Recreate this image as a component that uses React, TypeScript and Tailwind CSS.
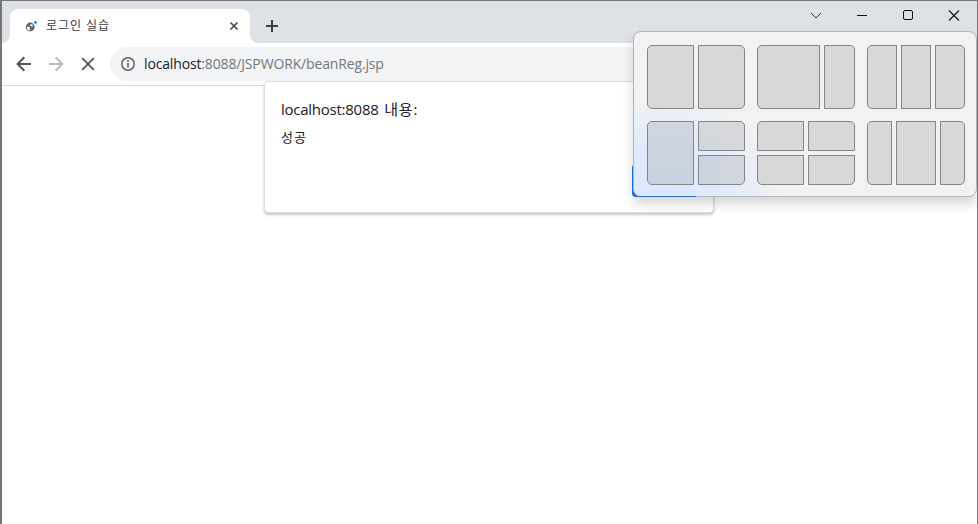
import React from "react";

const cell = "border border-[#858585] bg-[#d8d8d8]";
const tintedCell = "border border-[#858688]";

function SnapPanel() {
  return (
    <div className="absolute left-[633px] top-[31px] h-[166px] w-[344px] rounded-[8px] border border-[#b4b6b9] bg-[#f2f2f3] bg-[radial-gradient(ellipse_125px_95px_at_25px_160px,#d9e7fd_0%,#e1ebfc_55%,#f2f2f3_100%)] px-[13px] py-[13px] shadow-[0_7px_12px_rgba(0,0,0,0.16)]">
      <div className="grid grid-cols-[98px_98px_98px] grid-rows-[64px_64px] gap-3">
        <div className="flex gap-1">
          <div className={`${cell} w-[47px] rounded-l-[5px]`} />
          <div className={`${cell} w-[47px] rounded-r-[5px]`} />
        </div>
        <div className="flex gap-1">
          <div className={`${cell} w-[63px] rounded-l-[5px]`} />
          <div className={`${cell} w-[31px] rounded-r-[5px]`} />
        </div>
        <div className="flex gap-1">
          <div className={`${cell} w-[30px] rounded-l-[5px]`} />
          <div className={`${cell} w-[30px]`} />
          <div className={`${cell} w-[30px] rounded-r-[5px]`} />
        </div>
        <div className="flex gap-1">
          <div className={`${tintedCell} w-[47px] rounded-l-[5px] bg-linear-to-b from-[#d0d6e0] to-[#c7d3e1]`} />
          <div className="flex w-[47px] flex-col gap-1">
            <div className={`${tintedCell} h-[30px] rounded-tr-[5px] bg-linear-to-tr from-[#ced4e0] via-[#d6d7da] to-[#d8d8d8]`} />
            <div className={`${tintedCell} h-[30px] rounded-br-[5px] bg-linear-to-r from-[#cbd4e2] to-[#d4d6dd]`} />
          </div>
        </div>
        <div className="grid grid-cols-2 gap-1">
          <div className={`${cell} rounded-tl-[5px]`} />
          <div className={`${cell} rounded-tr-[5px]`} />
          <div className={`${cell} rounded-bl-[5px]`} />
          <div className={`${cell} rounded-br-[5px]`} />
        </div>
        <div className="flex gap-1">
          <div className={`${cell} w-[25px] rounded-l-[5px]`} />
          <div className={`${cell} w-[40px]`} />
          <div className={`${cell} w-[25px] rounded-r-[5px]`} />
        </div>
      </div>
      <div className="absolute -bottom-px left-[5px] h-px w-[57px] bg-[#2f6cbd]" />
    </div>
  );
}

function TabStrip() {
  return (
    <div className="flex h-[42px] items-end bg-[#dee1e6]">
      <svg className="h-2 w-2 shrink-0" viewBox="0 0 8 8">
        <path d="M8 0v8H0a8 8 0 0 0 8-8z" fill="#fff" />
      </svg>
      <div className="flex h-[34px] w-[240px] items-center rounded-t-[8px] bg-white pl-[15px] pr-[11px]">
        <svg width="13" height="14" viewBox="0 0 13 14">
          <circle cx="5.200" cy="8" r="4.400" fill="#5f6368" />
          <path d="M1.900 7.600l1.900.1 1.300 1.100-.5 1 .8.800-.7.900C2.700 11.200 1.700 9.800 1.900 7.600zM5.600 5.300l1.700.2.800 1.200-1.100.8-1.400-.4-.7-.9z" fill="#fff" />
          <circle cx="10.500" cy="3.500" r="1.200" fill="#1a73e8" />
          <path d="M10.500 1.700v3.600M8.700 3.500h3.600" stroke="#1a73e8" strokeWidth=".6" />
        </svg>
        <span className="ml-[8px] -mt-px flex-1 whitespace-nowrap text-[12px] leading-4 tracking-[0.95px] text-[#3c4043]">로그인 실습</span>
        <svg width="10" height="10" viewBox="0 0 10 10">
          <path d="M1.500 1.500l7 7M8.500 1.500l-7 7" stroke="#45494d" strokeWidth="1.700" />
        </svg>
      </div>
      <svg className="h-2 w-2 shrink-0" viewBox="0 0 8 8">
        <path d="M0 0v8h8a8 8 0 0 1-8-8z" fill="#fff" />
      </svg>
      <svg className="mb-[10px] ml-[7px]" width="14" height="14" viewBox="0 0 14 14">
        <path d="M7 1v12M1 7h12" stroke="#3c4043" strokeWidth="2" />
      </svg>
      <div className="ml-auto flex h-full items-start pr-[17px] pt-2">
        <svg width="12" height="12" viewBox="0 0 12 12" fill="none" stroke="#333" className="mr-[34px]">
          <path d="M1 4l5 5 5-5" />
        </svg>
        <svg width="12" height="12" viewBox="0 0 12 12" className="mr-[34px]">
          <path d="M1 6.500h10" stroke="#111" />
        </svg>
        <svg width="12" height="12" viewBox="0 0 12 12" fill="none" className="mr-[34px]">
          <rect x="1.500" y="1.500" width="9" height="9" rx="1.500" stroke="#111" />
        </svg>
        <svg width="12" height="12" viewBox="0 0 12 12" fill="none">
          <path d="M1 1.500l10 10M11 1.500l-10 10" stroke="#111" strokeWidth="1.100" />
        </svg>
      </div>
    </div>
  );
}

function Toolbar() {
  return (
    <div className="flex h-[43px] items-start border-b border-[#d8dadd] bg-white pt-1">
      <div className="flex h-[34px] w-[108px] items-center pl-[14px]">
        <svg width="16" height="16" viewBox="0 0 16 16" fill="none" stroke="#51565b" strokeWidth="2">
          <path d="M15 8H2M8.300 1.300L1.600 8l6.700 6.700" />
        </svg>
        <svg width="16" height="16" viewBox="0 0 16 16" fill="none" stroke="#babcbe" strokeWidth="2" className="ml-4">
          <path d="M1 8h13M7.700 1.300L14.400 8l-6.700 6.700" />
        </svg>
        <svg width="16" height="16" viewBox="0 0 16 16" fill="none" stroke="#51565b" strokeWidth="1.800" className="ml-4">
          <path d="M2.200 2.200l11.600 11.600M13.800 2.200L2.200 13.800" />
        </svg>
      </div>
      <div className="flex h-[34px] flex-1 items-center rounded-l-[17px] bg-[#f1f3f4] pl-[11px]">
        <svg width="14" height="14" viewBox="0 0 14 14" fill="none">
          <circle cx="7" cy="7" r="6.200" stroke="#5f6368" strokeWidth="1.500" />
          <path d="M7 6v4.500M7 3.300v1.600" stroke="#5f6368" strokeWidth="1.600" />
        </svg>
        <span className="ml-[9px] whitespace-nowrap text-[14px] leading-5 tracking-[-0.15px] text-[#74787c]">
          <span className="text-[#202124]">localhost</span>:8088/JSPWORK/beanReg.jsp
        </span>
      </div>
    </div>
  );
}

export default function App() {
  return (
    <div className="relative h-[524px] w-[978px] overflow-hidden border-l-2 border-r border-t border-l-[#777] border-r-[#777] border-t-[#777] bg-white font-['Open_Sans','Noto_Sans_CJK_KR',sans-serif]">
      <TabStrip />
      <Toolbar />
      <div className="absolute -left-[2px] -top-px h-[524px] w-[978px]">
        <div className="absolute left-[264px] top-[81px] h-[132px] w-[450px] rounded-[4px] border border-[#dcdddf] bg-white px-4 pt-4 shadow-[0_2px_3px_rgba(0,0,0,0.22)]">
          <p className="whitespace-nowrap text-[15px] leading-[22px] text-[#202124]">
            <span className="tracking-[-0.25px] [word-spacing:2px]">localhost:8088 </span>
            <span className="tracking-[0.8px]">내용:</span>
          </p>
          <p className="mt-[7px] text-[13px] leading-5 tracking-[1px] text-[#202124]">성공</p>
        </div>
        <div className="absolute left-[632px] top-[164px] h-[33px] w-[64px] rounded-[4px] bg-[#1a73e8]" />
        <SnapPanel />
      </div>
    </div>
  );
}
